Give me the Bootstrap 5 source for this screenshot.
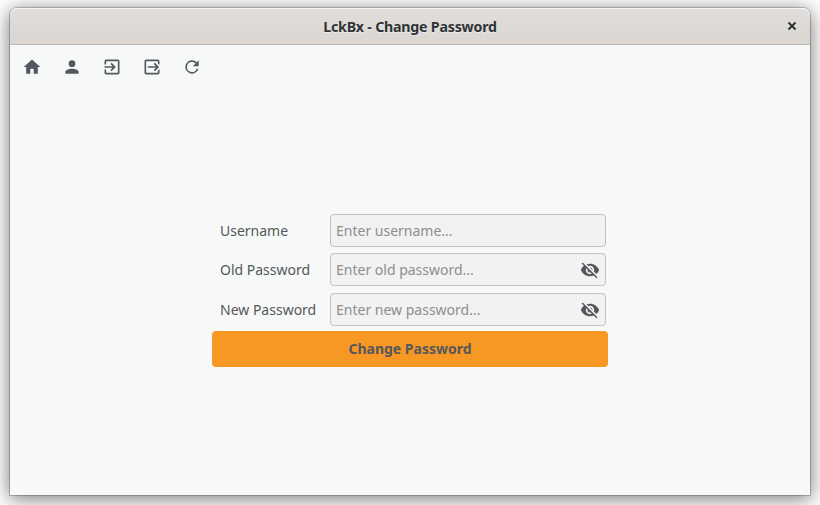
<!DOCTYPE html>
<html lang="en">
<head>
<meta charset="utf-8">
<title>LckBx - Change Password</title>
<link rel="stylesheet" href="https://cdn.jsdelivr.net/npm/bootstrap@5.3.0/dist/css/bootstrap.min.css">
<style>
body{background:#fff;font-family:"Noto Sans",sans-serif;font-size:14px;line-height:20px;color:#55575b;padding:8px 10px 10px;height:505px}
.app-window{height:487px;background:#f7f9f8;border-radius:7px 7px 0 0;box-shadow:0 0 0 1px rgba(0,0,0,.2),0 3px 19px 1px rgba(0,0,0,.52)}
.titlebar{height:37px;background:linear-gradient(#e1dedb,#dad6d2);border-bottom:1px solid #bfb8b1;border-radius:7px 7px 0 0;box-shadow:inset 0 1px #f7f6f5;color:#2e3436}
.window-title{font-size:14.2px;letter-spacing:-.21px;line-height:20px;padding-top:2px;text-shadow:0 1px rgba(255,255,255,.5)}
.close-btn{width:36px;height:36px;color:#2e3436}
.toolbar{padding:2px 0 0 2px}
.tool{width:40px;height:40px;color:#54585e}
svg{display:block;fill:currentColor}
.pw-form{width:396px;margin-top:124px}
.field-row{height:39.3px;padding-left:8px}
.field-label{width:110px}
.entry{width:276px;height:33px;background:#f2f2f2;border:1px solid #c0c0c0;border-radius:4px;padding:0 5px;color:#54585e}
.entry input{font-size:14px;line-height:20px;color:#55575b;box-shadow:none!important}
.entry input::placeholder{color:#8d8e90;opacity:1}
.field-row-last .field-label,.field-row-last .entry{padding-top:2px}
.submit-btn{height:36px;background:#f79824;color:#55575b;font-size:14px;line-height:20px;border-radius:4px;margin-top:2px}
</style>
</head>
<body class="overflow-hidden">
<main class="app-window d-flex flex-column">
  <header class="titlebar d-flex align-items-center flex-shrink-0">
    <div class="close-btn"></div>
    <div class="window-title fw-bold flex-grow-1 text-center">LckBx - Change Password</div>
    <button class="close-btn btn p-0 border-0 d-flex align-items-center justify-content-center" aria-label="Close"><svg width="10" height="10" viewBox="0 0 10 10"><path d="M1.5 1.5l7 7M8.500 1.500l-7 7" fill="none" stroke="currentColor" stroke-width="2"/></svg></button>
  </header>
  <nav class="toolbar d-flex">
    <button class="tool btn border-0 p-0 d-flex align-items-center justify-content-center" aria-label="Home"><svg width="20" height="20" viewBox="0 0 24 24"><path d="M10 20v-6h4v6h5v-8h3L12 3 2 12h3v8z"/></svg></button>
    <button class="tool btn border-0 p-0 d-flex align-items-center justify-content-center" aria-label="Account"><svg width="20" height="20" viewBox="0 0 24 24"><path d="M12 4a4 4 0 1 1 0 8 4 4 0 0 1 0-8m0 10c4.420 0 8 1.790 8 4v2H4v-2c0-2.210 3.580-4 8-4z"/></svg></button>
    <button class="tool btn border-0 p-0 d-flex align-items-center justify-content-center" aria-label="Log in"><svg width="20" height="20" viewBox="0 0 24 24"><path d="M19 3H5a2 2 0 0 0-2 2v4h2V5h14v14H5v-4H3v4a2 2 0 0 0 2 2h14a2 2 0 0 0 2-2V5a2 2 0 0 0-2-2M10.080 15.580L11.500 17l5-5-5-5-1.420 1.410L12.670 11H3v2h9.670z"/></svg></button>
    <button class="tool btn border-0 p-0 d-flex align-items-center justify-content-center" aria-label="Log out"><svg width="20" height="20" viewBox="0 0 24 24"><path d="M14.080 15.590L16.670 13H7v-2h9.670l-2.590-2.590L15.500 7l5 5-5 5zM19 3a2 2 0 0 1 2 2v4.670l-2-2V5H5v14h14v-2.670l2-2V19a2 2 0 0 1-2 2H5a2 2 0 0 1-2-2V5a2 2 0 0 1 2-2z"/></svg></button>
    <button class="tool btn border-0 p-0 d-flex align-items-center justify-content-center" aria-label="Refresh"><svg width="20" height="20" viewBox="0 0 24 24"><path d="M17.650 6.350A8 8 0 1 0 19.730 14h-2.080A6 6 0 1 1 12 6c1.660 0 3.140.69 4.220 1.780L13 11h7V4z"/></svg></button>
  </nav>
  <form class="pw-form mx-auto">
    <div class="field-row d-flex align-items-center">
      <label class="field-label" for="user">Username</label>
      <div class="entry d-flex align-items-center"><input id="user" class="form-control border-0 bg-transparent p-0" placeholder="Enter username..."></div>
    </div>
    <div class="field-row d-flex align-items-center">
      <label class="field-label" for="old">Old Password</label>
      <div class="entry d-flex align-items-center"><input id="old" type="password" class="form-control border-0 bg-transparent p-0" placeholder="Enter old password..."><svg class="flex-shrink-0" width="20" height="20" viewBox="0 0 24 24"><path d="M12 7c2.760 0 5 2.240 5 5 0 .65-.13 1.260-.36 1.830l2.920 2.920c1.510-1.260 2.700-2.890 3.430-4.750-1.730-4.390-6-7.500-11-7.500-1.400 0-2.740.25-3.980.7l2.160 2.160C10.740 7.130 11.350 7 12 7zM2 4.270l2.740 2.740C3.080 8.300 1.780 10.020 1 12c1.730 4.390 6 7.500 11 7.500 1.550 0 3.030-.3 4.380-.84L19.730 22 21 20.730 3.270 3zM7.530 9.800l1.550 1.550c-.05.21-.08.43-.08.65 0 1.660 1.340 3 3 3 .22 0 .44-.03.65-.08l1.550 1.550c-.67.33-1.410.53-2.200.53-2.760 0-5-2.240-5-5 0-.79.2-1.530.53-2.200zm4.310-.78l3.150 3.150.02-.16c0-1.660-1.340-3-3-3z"/></svg></div>
    </div>
    <div class="field-row field-row-last d-flex align-items-center">
      <label class="field-label" for="new">New Password</label>
      <div class="entry d-flex align-items-center"><input id="new" type="password" class="form-control border-0 bg-transparent p-0" placeholder="Enter new password..."><svg class="flex-shrink-0" width="20" height="20" viewBox="0 0 24 24"><path d="M12 7c2.760 0 5 2.240 5 5 0 .65-.13 1.260-.36 1.830l2.920 2.920c1.510-1.260 2.700-2.890 3.430-4.750-1.730-4.390-6-7.500-11-7.500-1.400 0-2.740.25-3.980.7l2.160 2.160C10.740 7.130 11.350 7 12 7zM2 4.270l2.740 2.740C3.080 8.300 1.780 10.020 1 12c1.730 4.390 6 7.500 11 7.500 1.550 0 3.030-.3 4.380-.84L19.730 22 21 20.730 3.270 3zM7.530 9.800l1.550 1.550c-.05.21-.08.43-.08.65 0 1.660 1.340 3 3 3 .22 0 .44-.03.65-.08l1.550 1.550c-.67.33-1.410.53-2.200.53-2.760 0-5-2.240-5-5 0-.79.2-1.530.53-2.200zm4.310-.78l3.150 3.150.02-.16c0-1.660-1.340-3-3-3z"/></svg></div>
    </div>
    <button type="button" class="submit-btn btn w-100 border-0 p-0 fw-bold">Change Password</button>
  </form>
</main>
<script src="https://cdn.jsdelivr.net/npm/bootstrap@5.3.0/dist/js/bootstrap.bundle.min.js"></script>
</body>
</html>
